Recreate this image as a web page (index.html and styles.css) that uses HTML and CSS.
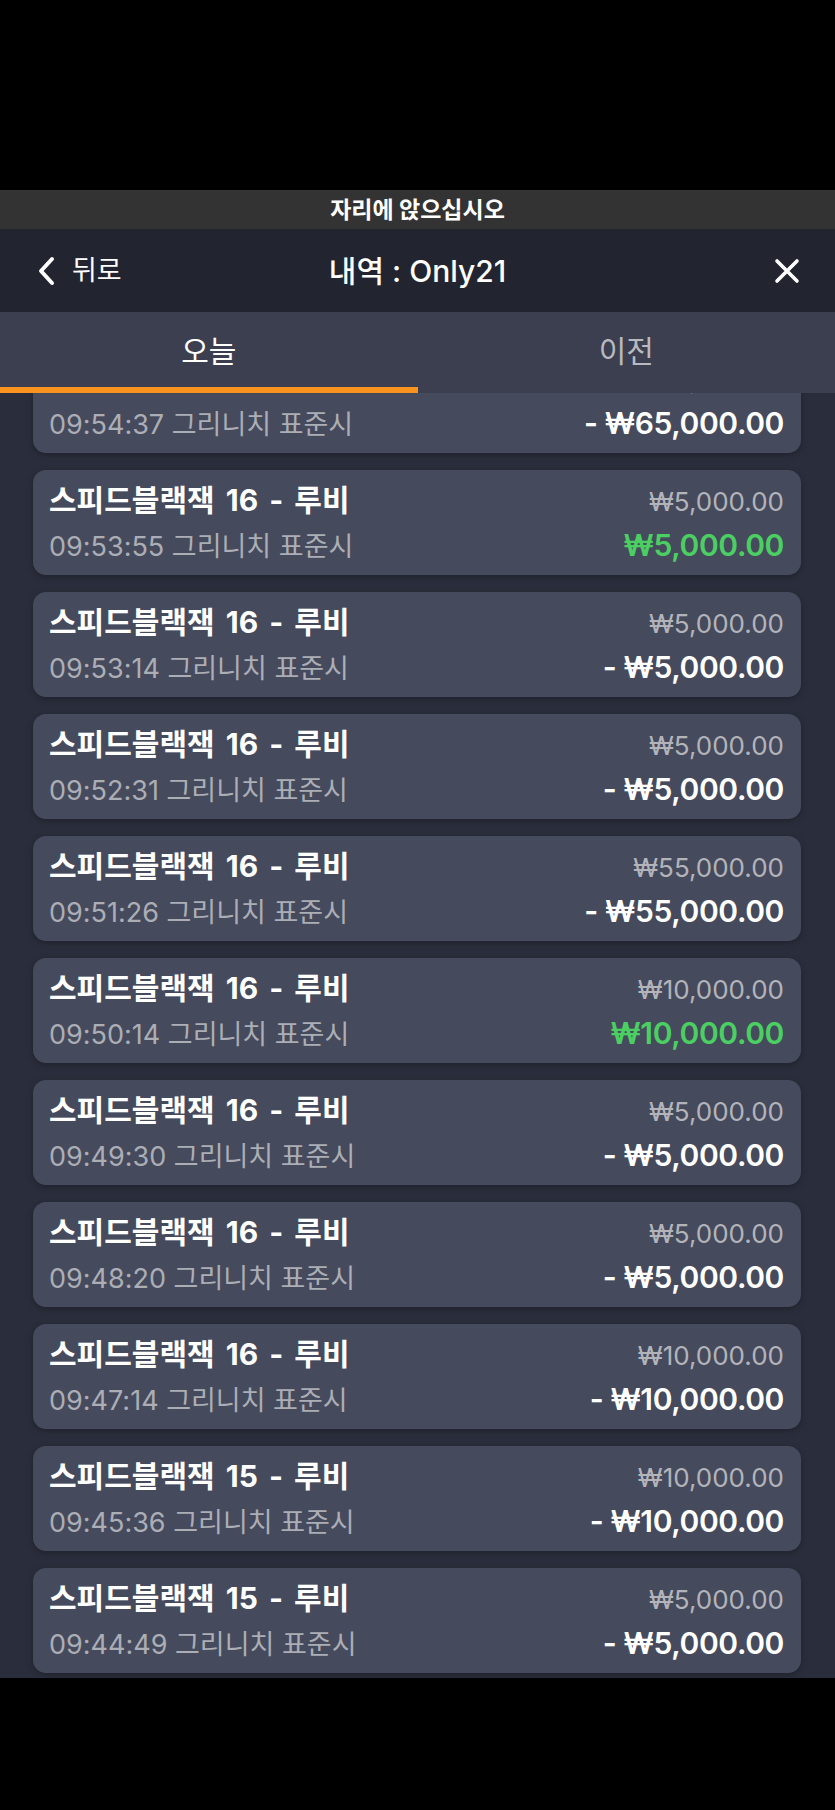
FILE: index.html
```html
<!DOCTYPE html>
<html lang="ko">
<head>
    <meta charset="UTF-8">
    <meta name="viewport" content="width=device-width, initial-scale=1.0">
    <title>내역 : Only21</title>
    <link rel="stylesheet" href="styles.css">
</head>
<body>
    <div class="screen">
        <div class="top-gap"></div>
        <div class="notice">자리에 앉으십시오</div>

        <div class="header">
            <div class="back">
                <svg class="chevron" width="20" height="30" viewBox="0 0 20 30">
                    <polyline points="16,3 5,15 16,27" fill="none" stroke="#fff" stroke-width="4" stroke-linecap="round" stroke-linejoin="round"/>
                </svg>
                <span>뒤로</span>
            </div>
            <div class="title">내역 : Only21</div>
            <svg class="close" width="26" height="26" viewBox="0 0 26 26">
                <path d="M3 3 L23 23 M23 3 L3 23" stroke="#fff" stroke-width="3.6" stroke-linecap="round"/>
            </svg>
        </div>

        <div class="tabs">
            <div class="tab active">오늘</div>
            <div class="tab">이전</div>
        </div>

        <div class="list">
            <div class="list-inner">
                <div class="card">
                    <div class="row"><span class="game">스피드블랙잭 16 - 루비</span><span class="bet">₩65,000.00</span></div>
                    <div class="row"><span class="time">09:54:37 그리니치 표준시</span><span class="result">- ₩65,000.00</span></div>
                </div>
                <div class="card">
                    <div class="row"><span class="game">스피드블랙잭 16 - 루비</span><span class="bet">₩5,000.00</span></div>
                    <div class="row"><span class="time">09:53:55 그리니치 표준시</span><span class="result win">₩5,000.00</span></div>
                </div>
                <div class="card">
                    <div class="row"><span class="game">스피드블랙잭 16 - 루비</span><span class="bet">₩5,000.00</span></div>
                    <div class="row"><span class="time">09:53:14 그리니치 표준시</span><span class="result">- ₩5,000.00</span></div>
                </div>
                <div class="card">
                    <div class="row"><span class="game">스피드블랙잭 16 - 루비</span><span class="bet">₩5,000.00</span></div>
                    <div class="row"><span class="time">09:52:31 그리니치 표준시</span><span class="result">- ₩5,000.00</span></div>
                </div>
                <div class="card">
                    <div class="row"><span class="game">스피드블랙잭 16 - 루비</span><span class="bet">₩55,000.00</span></div>
                    <div class="row"><span class="time">09:51:26 그리니치 표준시</span><span class="result">- ₩55,000.00</span></div>
                </div>
                <div class="card">
                    <div class="row"><span class="game">스피드블랙잭 16 - 루비</span><span class="bet">₩10,000.00</span></div>
                    <div class="row"><span class="time">09:50:14 그리니치 표준시</span><span class="result win">₩10,000.00</span></div>
                </div>
                <div class="card">
                    <div class="row"><span class="game">스피드블랙잭 16 - 루비</span><span class="bet">₩5,000.00</span></div>
                    <div class="row"><span class="time">09:49:30 그리니치 표준시</span><span class="result">- ₩5,000.00</span></div>
                </div>
                <div class="card">
                    <div class="row"><span class="game">스피드블랙잭 16 - 루비</span><span class="bet">₩5,000.00</span></div>
                    <div class="row"><span class="time">09:48:20 그리니치 표준시</span><span class="result">- ₩5,000.00</span></div>
                </div>
                <div class="card">
                    <div class="row"><span class="game">스피드블랙잭 16 - 루비</span><span class="bet">₩10,000.00</span></div>
                    <div class="row"><span class="time">09:47:14 그리니치 표준시</span><span class="result">- ₩10,000.00</span></div>
                </div>
                <div class="card">
                    <div class="row"><span class="game">스피드블랙잭 15 - 루비</span><span class="bet">₩10,000.00</span></div>
                    <div class="row"><span class="time">09:45:36 그리니치 표준시</span><span class="result">- ₩10,000.00</span></div>
                </div>
                <div class="card">
                    <div class="row"><span class="game">스피드블랙잭 15 - 루비</span><span class="bet">₩5,000.00</span></div>
                    <div class="row"><span class="time">09:44:49 그리니치 표준시</span><span class="result">- ₩5,000.00</span></div>
                </div>
            </div>
        </div>

        <div class="bottom-gap"></div>
    </div>
</body>
</html>
```

FILE: styles.css
```css
body {
    margin: 0;
    background: #000;
    font-family: "Inter", "Noto Sans CJK KR", sans-serif;
    color: #fff;
}
.screen {
    width: 835px;
    height: 1810px;
    display: flex;
    flex-direction: column;
    overflow: hidden;
}
.top-gap { height: 190px; flex-shrink: 0; background: #000; }
.bottom-gap { flex: 1; background: #000; }

.notice {
    height: 39px;
    flex-shrink: 0;
    background: #333333;
    display: flex;
    align-items: center;
    justify-content: center;
    font-size: 23px;
    font-weight: 700;
    line-height: 28px;
}

.header {
    height: 83px;
    flex-shrink: 0;
    background: #222430;
    display: flex;
    align-items: center;
    justify-content: space-between;
    padding: 0 35px 0 36px;
    position: relative;
}
.back {
    display: flex;
    align-items: center;
    gap: 16px;
    font-size: 27px;
    line-height: 34px;
}
.title {
    position: absolute;
    left: 0;
    right: 0;
    text-align: center;
    font-size: 30px;
    font-weight: 500;
    line-height: 36px;
    pointer-events: none;
}

.tabs {
    height: 81px;
    flex-shrink: 0;
    background: #3c3f4f;
    display: flex;
    align-items: flex-start;
}
.tab {
    flex: 1;
    height: 81px;
    box-sizing: border-box;
    padding-top: 21px;
    text-align: center;
    font-size: 30px;
    line-height: 36px;
    color: #b9bac0;
}
.tab.active {
    color: #fff;
    border-bottom: 6px solid #f7931e;
}

.list {
    height: 1285px;
    flex-shrink: 0;
    background: #2a2d3b;
    overflow: hidden;
}
.list-inner {
    margin-top: -45px;
    padding: 0 34px 0 33px;
    display: flex;
    flex-direction: column;
    gap: 17px;
}
.card {
    height: 105px;
    flex-shrink: 0;
    box-sizing: border-box;
    background: #464a5d;
    border-radius: 13px;
    box-shadow: 0 2px 6px rgba(0, 0, 0, 0.25);
    padding: 12px 17px 0 16px;
    display: flex;
    flex-direction: column;
    gap: 9px;
}
.row {
    display: flex;
    justify-content: space-between;
    align-items: baseline;
}
.game {
    font-size: 30px;
    font-weight: 700;
    line-height: 36px;
    word-spacing: 4px;
}
.bet {
    font-size: 26px;
    color: #b3b4ba;
}
.time {
    font-size: 27px;
    color: #acaeb5;
    line-height: 40px;
}
.result {
    font-size: 30px;
    font-weight: 600;
    letter-spacing: -0.4px;
    color: #fff;
}
.result.win { color: #4ccf62; }
```
